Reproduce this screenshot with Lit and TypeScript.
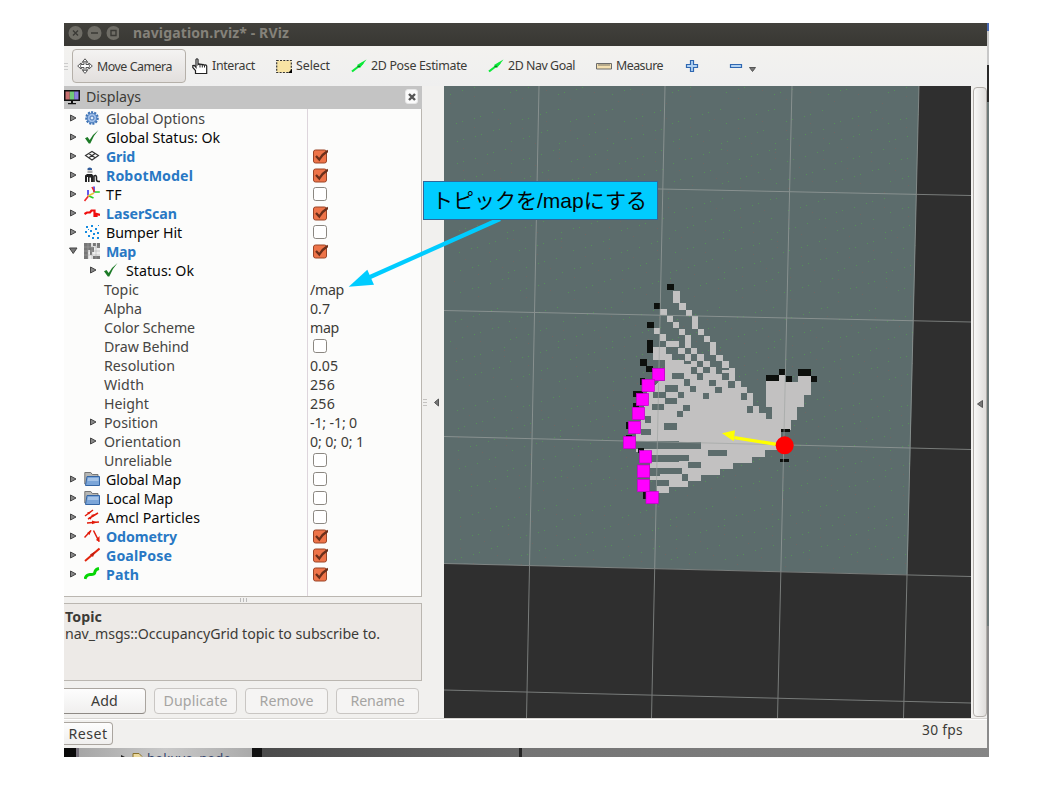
import { LitElement, html, svg, css, nothing } from "lit";
import { customElement, property } from "lit/decorators.js";
import { styleMap } from "lit/directives/style-map.js";

const FAMILY = '"Noto Sans", "Open Sans", sans-serif';
const ctx = document.createElement("canvas").getContext("2d")!;

@customElement("fit-text")
class FitText extends LitElement {
  @property() text = "";
  @property({ type: Number }) w = 0;
  @property({ type: Number }) size = 14.5;
  @property({ type: Boolean }) bold = false;
  static styles = css`
    :host { display: inline-block; white-space: pre; flex: none; }
    .t { font-family: "Noto Sans", "Open Sans", sans-serif; display: block; }
  `;
  render() {
    const weight = this.bold ? 700 : 400;
    ctx.font = `${weight} ${this.size}px ${FAMILY}`;
    const gap = (this.w - ctx.measureText(this.text).width) / this.text.length;
    return html`<span class="t" style=${styleMap({
      fontSize: this.size + "px",
      fontWeight: String(weight),
      letterSpacing: gap.toFixed(3) + "px",
      width: this.w + "px",
    })}>${this.text}</span>`;
  }
}

const fit = (text: string, w: number, size = 14.5, bold = false) =>
  html`<fit-text .text=${text} .w=${w} .size=${size} .bold=${bold}></fit-text>`;

const icons: Record<string, unknown> = {
  gear: svg`<circle cx="8" cy="8" r="5.6" fill="#a9c5ea" stroke="#3f73b5" stroke-width="2.4" stroke-dasharray="2 1.1"/><circle cx="8" cy="8" r="4.7" fill="#9dbde8" stroke="#5585c2"/><circle cx="8" cy="8" r="2" fill="#dce9f8" stroke="#4677b8"/>`,
  check: svg`<path d="M1 9.300 L3.500 8 L5.700 11 Q9 5 14.500 1 Q9 7 6.300 14.500 L4.800 14.500 Z" fill="#1c7a26"/>`,
  grid: svg`<path d="M1.500 7.500 L8 3.500 L14.500 7.500 L8 12 Z M4.700 5.500 L11.200 9.800 M11.200 5.500 L4.700 9.800" fill="none" stroke="#333" stroke-width="1.100"/>`,
  robot: svg`<path d="M3.500 1.500Q5.500 -.5 8 1.500v1.500h-4.500z" fill="#315b99"/><path d="M3.500 3.500h5v2.500h-5z" fill="#aaa"/><path d="M1 8.500L3 7h5l1.500 2v6H7v-4.500H5.500V15H4v-5H3v5H1z" fill="#222"/><path d="M10 15V9q2-1.500 2.500 1v3q.5 2 3.500 1.500" fill="none" stroke="#222" stroke-width="1.500"/>`,
  tf: svg`<path d="M10 6.500 V.5 M4 9.500 V4" stroke="#5148e8" stroke-width="1.800"/><path d="M10.500 6 h5.300 M5 10 L9.500 12" stroke="#25cf25" stroke-width="1.700"/><path d="M10.500 6 L8 1 M4.500 10 L.5 15" stroke="#ef2929" stroke-width="1.600"/><path d="M4 10 L10 7" stroke="#e7c43a" stroke-width="1.800"/>`,
  laser: svg`<path d="M.5 9 L3 7.500 L6 7.500 L7.500 5.500 L10.500 5.500 V11 L12.500 11 V9 L16 10" fill="none" stroke="#f00d0d" stroke-width="2.200"/>`,
  bump: svg`<path d="M2 2h2v2H2zM7 1h2v2H7zM11 4h2v2h-2zM6 6h2v2H6zM1 7h2v2H1zM13 8h2v2h-2zM9 9h2v2H9zM4 11h2v2H4zM8 13h2v2H8zM13 13h2v2h-2zM14 1h1v1h-1zM4 5h1v1H4z" fill="#168be0"/>`,
  map: svg`<path d="M0 0h16v16H0z" fill="#eee"/><path d="M0 0h7v7H4v9H0zM9 0h3v3H9zM13 0h3v5h-3zM7 4h3v5H8v3H6V7h1zM9 13h7v3H9z" fill="#777"/><path d="M4 0v16M8 0v16M12 0v16M0 4h16M0 8h16M0 12h16" stroke="#aaa" stroke-width=".5"/>`,
  folder: svg`<path d="M.8 13V1.500h6l1.500 2h5.700V13z" fill="#b7b7b4" stroke="#777"/><path d="M3 5.500h12.500v9H1.500z" fill="#7ba5d8" stroke="#3465a4"/><path d="M4 7h10.500v3H3.500z" fill="#a5c3e6"/>`,
  amcl: svg`<path d="M1 7 L9 1 M4 10 L14 4 M3 14 L15 13 M5 8.500 L7 10" stroke="#e21c0c" stroke-width="1.500"/><path d="M3 3.500l4-1-2 3zM7 6l4-1-2 3zM8 11.500l5 1.800-5 2z" fill="#e21c0c"/>`,
  odom: svg`<path d="M.5 9.500 L7 2.500 M9.500 2.500 L15 13.500" stroke="#e21c0c" stroke-width="1.500"/><path d="M3 5l4.500-3-2 5zM12 12l3.500 2v-6z" fill="#e21c0c"/>`,
  goal: svg`<path d="M1 14 L15.500 1.500" stroke="#e2240c" stroke-width="2"/><path d="M6 7.500 L11 4.500 L9 10z" fill="#c22010"/>`,
  path: svg`<path d="M1 13 Q2 9 6 8.500 Q11 9 11 5.500 Q12 3 15 2.500" fill="none" stroke="#06d606" stroke-width="3"/>`,
  display: svg`<path d="M0 1h16v11H0z" fill="#111"/><path d="M1.500 2.500h4.300v8H1.500z" fill="#c87070"/><path d="M5.800 2.500h4.400v8H5.800z" fill="#70c878"/><path d="M10.200 2.500h4.300v8h-4.300z" fill="#8a7edc"/><path d="M7 12h2v2h3v1.300H4V14h3z" fill="#111"/>`,
  move: svg`<path d="M8 .8l2.500 3H9v2.700h3V5l3.300 3L12 11V9.500H9v3h1.500L8 15.400 5.500 12.500H7v-3H4V11L.7 8 4 5v1.500h3V3.800H5.500z" fill="#fff" stroke="#555" stroke-width="1"/><ellipse cx="8" cy="8" rx="4.500" ry="4.500" fill="none" stroke="#777"/>`,
  hand: svg`<path d="M3.500 15.500v-3L.8 9.500V7.600l1.500-.2 1.700 2V1.500q1-1.500 2 0v5q1-1 2 0 1-.9 2 .2 1-.6 2 .4 2-.6 2.700.8v7.600z" fill="#fff" stroke="#222" stroke-width="1.200"/><path d="M8 6.500v3M10.300 7V9.500M12.500 7.300V9.500" stroke="#222"/>`,
  select: svg`<path d="M.7 2.500h14.600v12H.7z" fill="#f8e4a4" stroke="#333" stroke-width="1.200" stroke-dasharray="2 1.300"/><path d="M12 15l4-4v4z" fill="#000"/>`,
  green: svg`<path d="M1 13.500 L12 5" stroke="#0bea38" stroke-width="2.200"/><path d="M6 7 L15.500 1.500 L9 10z" fill="#0bea38"/><path d="M6.500 8.500h2.500" stroke="#0a7d22" stroke-width="1.500"/>`,
  ruler: svg`<path d="M.5 5.500h15v5.500H.5z" fill="#f3dfb0" stroke="#6b6b6b"/><path d="M3 6v2M5 6v2M7 6v2M9 6v2M11 6v2M13 6v2" stroke="#555" stroke-width=".8"/>`,
  plus: svg`<path d="M6.500 2.500h3v4h4v3h-4v4h-3v-4h-4v-3h4z" fill="#b3d3f3" stroke="#2f67b1" stroke-width="1.200"/>`,
  minus: svg`<path d="M2.500 6.500h11v3h-11z" fill="#b3d3f3" stroke="#2f67b1" stroke-width="1.200"/>`,
  right: svg`<path d="M6.500 5 L12 8 L6.500 11z" fill="#888" stroke="#444"/>`,
  down: svg`<path d="M5.500 5 H13 L9.200 10.500z" fill="#777" stroke="#444"/>`,
  left: svg`<path d="M10.500 6.500 V13.500 L5.500 10z" fill="#777" stroke="#555"/>`,
  on: svg`<rect x="1.500" y="2" width="13" height="13" rx="2" fill="#ee7449" stroke="#9a4427"/><path d="M4 8 L7.300 11.500 Q10.500 6 16 2.800" fill="none" stroke="#6b2f1b" stroke-width="2.300"/>`,
  off: svg`<rect x="1.500" y="1.500" width="13" height="13" rx="2.200" fill="#fff" stroke="#8b8781"/>`,
};
const icon = (n: string) => html`<svg class="i" width="16" height="16" viewBox="0 0 16 16">${icons[n]}</svg>`;

type Row = { t: string; w: number; i?: string; k?: "b" | "k" | "g"; d?: number; a?: string; v?: string; vw?: number; c?: boolean };
const rows: Row[] = [
  { t: "Global Options", w: 99, i: "gear", k: "g", a: "right" },
  { t: "Global Status: Ok", w: 114, i: "check", a: "right" },
  { t: "Grid", w: 29, i: "grid", k: "b", a: "right", c: true },
  { t: "RobotModel", w: 87, i: "robot", k: "b", a: "right", c: true },
  { t: "TF", w: 16, i: "tf", a: "right", c: false },
  { t: "LaserScan", w: 71, i: "laser", k: "b", a: "right", c: true },
  { t: "Bumper Hit", w: 76, i: "bump", a: "right", c: false },
  { t: "Map", w: 30, i: "map", k: "b", a: "down", c: true },
  { t: "Status: Ok", w: 68, i: "check", d: 1, a: "right" },
  { t: "Topic", w: 35, k: "g", d: 1, v: "/map", vw: 34 },
  { t: "Alpha", w: 38, k: "g", d: 1, v: "0.7", vw: 20 },
  { t: "Color Scheme", w: 91, k: "g", d: 1, v: "map", vw: 29 },
  { t: "Draw Behind", w: 85, k: "g", d: 1, c: false },
  { t: "Resolution", w: 71, k: "g", d: 1, v: "0.05", vw: 28 },
  { t: "Width", w: 40, k: "g", d: 1, v: "256", vw: 25 },
  { t: "Height", w: 45, k: "g", d: 1, v: "256", vw: 25 },
  { t: "Position", w: 54, k: "g", d: 1, a: "right", v: "-1; -1; 0", vw: 47 },
  { t: "Orientation", w: 77, k: "g", d: 1, a: "right", v: "0; 0; 0; 1", vw: 54 },
  { t: "Unreliable", w: 68, k: "g", d: 1, c: false },
  { t: "Global Map", w: 75, i: "folder", a: "right", c: false },
  { t: "Local Map", w: 67, i: "folder", a: "right", c: false },
  { t: "Amcl Particles", w: 94, i: "amcl", a: "right", c: false },
  { t: "Odometry", w: 71, i: "odom", k: "b", a: "right", c: true },
  { t: "GoalPose", w: 66, i: "goal", k: "b", a: "right", c: true },
  { t: "Path", w: 33, i: "path", k: "b", a: "right", c: true },
];

type R = [number, number, number, number];
const upperFree: R[] = [
  [190,62,20,37],[208,99,20,20],[228,120,18,18],[246,138,18,39],[264,177,18,18],[282,197,18,19],[300,216,18,38],[318,254,21,19],[337,273,20,20],[357,293,18,10],
  [150,117,20,18],[170,137,18,19],[189,156,18,19],[207,177,18,18],[225,195,18,39],[243,234,18,18],[262,253,20,19],[280,272,20,20],[300,291,18,12],
  [132,174,18,18],[150,193,18,20],[168,213,39,18],[129,231,39,38],[204,234,21,18],[168,252,18,30],[225,252,18,20],[165,270,57,20],[243,272,18,20],[165,290,78,12],[262,290,18,12],[186,283,57,10],[318,300,57,3],
];
const holes: R[] = [
  [186,8,36,18],[222,28,18,20],[262,10,18,20],[240,48,18,18],[298,30,20,18],[316,50,20,20],[318,-1,18,12],[336,10,20,20],[354,33,20,20],[243,-8,18,20],[280,-8,20,18],[280,68,18,19],
  [393,70,18,20],[411,108,18,20],[165,45,38,20],[204,66,18,18],[129,65,38,18],[165,84,35,18],[125,102,37,18],[220,104,20,19],[201,123,18,18],[105,138,18,20],
  [163,159,38,20],[93,177,30,18],[78,216,195,20],[78,214,130,5],[295,240,56,18],[120,256,117,18],[120,274,86,2],[234,276,39,18],[120,293,96,18],[216,312,18,20],[120,312,30,5],[140,330,38,18],[467,110,19,36],
];
const walls: R[] = [
  [171,-258,21,18],[132,-201,18,18],[111,-145,20,18],[111,-89,18,37],[90,-33,20,20],[108,-11,20,16],[90,24,16,20],[468,15,39,19],[507,-3,18,18],[528,17,18,18],[564,-3,39,21],[603,18,18,17],
  [69,63,30,18],[69,99,18,12],[48,156,20,20],[48,195,18,6],[84,234,18,14],[99,365,15,21],[513,177,27,8],[510,267,27,8],
];
const scans: [number, number][] = [[126,-6],[95,27],[78,69],[66,111],[54,153],[39,198],[87,241],[81,284],[81,327],[107,363]];
const cells = (list: R[]) => list.map(([x, y, w, h]) => `M${x} ${y}h${w}v${h}h${-w}z`).join("");

const speckle = (() => {
  let g = "", r = "";
  for (let row = 0; row < 22; row++) {
    for (let k = 0; k < 86; k++) {
      const x = 450 + k * 6 + ((row * 17) % 11);
      const y = 94 + row * 22 - (k % 9) * 1.8 + ((row * 7) % 9);
      if ((k * 7 + row * 5) % 11 < 7) g += `M${Math.round(x)} ${Math.round(y)}h1v1h-1z`;
      if ((k + row) % 4 === 0) r += `M${Math.round(x)} ${Math.round(y + 9)}h1v1h-1z`;
    }
  }
  return { g, r };
})();

@customElement("app-root")
class AppRoot extends LitElement {
  static styles = css`
    * { box-sizing: border-box; }
    :host { display: block; box-sizing: border-box; position: relative; width: 1058px; height: 794px; background: #fff; padding: 23px 0 0 64px; overflow: hidden; color: #3c3b37; font-family: "Noto Sans", sans-serif; }
    svg { display: block; flex: none; }
    .desk { display: grid; grid-template-columns: 923px 2px; width: 925px; }
    .win { height: 725px; background: #f1f0ee; display: flex; flex-direction: column; }
    .title { height: 23px; background: linear-gradient(#42413c, #383733); display: flex; align-items: center; color: #85827a; padding: 0 0 4px 3px; }
    .title svg { margin: 1px 14px 0 0; }
    .tools { height: 40px; display: flex; align-items: center; background: linear-gradient(#f3f2ef, #efefef); }
    .tool { display: flex; align-items: center; height: 34px; gap: 4px; padding-bottom: 1px; }
    .grip { width: 8px; }
    .active { width: 114px; border: 1px solid #b5b0a9; border-radius: 4px; padding: 0 0 0 4px; background: linear-gradient(#f4f3f2, #e2dfdd); }
    .gap-s { margin-left: 6px; }
    .gap-m { margin-left: 21px; }
    .gap-l { margin-left: 28px; }
    .body { height: 632px; display: flex; }
    .panel { width: 358px; display: flex; flex-direction: column; }
    .head { height: 23px; background: #c4c4c4; display: flex; align-items: center; gap: 6px; padding: 0 4px 2px 0; }
    .close { margin-left: auto; width: 13px; height: 15px; border-radius: 3px; background: #fbfbfb; border: 1px solid #e8e8e8; display: grid; place-items: center; }
    .tree { height: 488px; background: #fcfcfb; border-right: 1px solid #bab6b0; border-bottom: 1px solid #bab6b0; background-image: linear-gradient(#ddd5dc, #ddd5dc); background-size: 1px 100%; background-position: 243px 0; background-repeat: no-repeat; }
    .row { height: 19px; display: grid; grid-template-columns: 243px 1fr; grid-template-rows: 18px; align-items: center; }
    .name { display: flex; align-items: center; }
    .arrow { width: 16px; height: 16px; }
    .l0 { padding-left: 0; }
    .l1 { padding-left: 20px; }
    .ic { margin-left: 4px; }
    .txt { margin-left: 4px; }
    .ic + .txt { margin-left: 6px; }
    .l1 .ic { margin-left: 3px; }
    .l1 .ic + .txt { margin-left: 7px; }
    .k { color: #080808; }
    .b { color: #2878c4; }
    .g { color: #464543; }
    .val { padding-left: 3px; display: flex; align-items: center; height: 18px; }
    .val.c { padding-left: 5px; }
    .hgrip { height: 6px; display: flex; justify-content: center; align-items: center; }
    .desc { height: 78px; background: #edeae7; border: 1px solid #bab6b0; border-left: 0; padding: 4px 1px; line-height: 17px; display: flex; flex-direction: column; align-items: flex-start; }
    .desc fit-text { height: 17px; }
    .btns { display: flex; gap: 8px; padding-top: 7px; }
    .btn { height: 26px; width: 83px; border: 1px solid #aaa59f; border-radius: 4px; display: grid; place-items: center; background: linear-gradient(#fdfdfd, #f0efee); padding-bottom: 2px; }
    .btn.first { width: 82px; border-left: 0; border-radius: 0 4px 4px 0; border-bottom-color: #8e8a85; }
    .btn.dis { color: #a5a4a2; border-color: #c9c6c3; background: #f5f4f3; }
    .split { width: 22px; display: flex; align-items: center; }
    .side { width: 16px; padding: 1px 1px 1px 2px; display: flex; }
    .bar { width: 14px; border: 1px solid #b2aeaa; border-radius: 4px; background: linear-gradient(90deg, #f8f8f7, #dfdddb); display: flex; align-items: center; justify-content: center; }
    .status { height: 30px; border-top: 1px solid #d8d6d3; display: flex; justify-content: space-between; align-items: flex-start; padding: 3px 24px 0 0; box-shadow: inset 0 1px #fff; }
    .status > fit-text { line-height: 15px; }
    .reset { width: 49px; height: 23px; border: 1px solid #aaa59f; border-left: 0; border-radius: 0 4px 4px 0; display: grid; place-items: center; background: linear-gradient(#fdfdfd, #f0efee); }
    .sliver { background: linear-gradient(#4a69b0 0 8px, #c8c8c8 8px 42px, #292929 42px 79px, #6d7979 79px 603px, #8b8b8b 603px); height: 725px; }
    .under { grid-column: 1 / 3; height: 9px; overflow: hidden; display: flex; background: linear-gradient(90deg, #626262, #858585); }
    .u1 { width: 15px; background: linear-gradient(90deg, #090909 12px, #77727c 12px); }
    .u2 { width: 173px; background: linear-gradient(90deg, #a6a6a6, #c9c9c9 50%, #aaa); display: flex; padding-left: 38px; gap: 4px; color: #34446b; line-height: 20px; }
    .u3 { width: 10px; background: #111; }
    .u4 { width: 260px; background: linear-gradient(90deg, #4b4b4b, #686868); border-right: 3px solid #252525; }
    .note { position: absolute; left: 423px; top: 181px; width: 235px; height: 39px; background: #00ccff; border: 1px solid #31679a; color: #050505; font-family: "Liberation Sans", "Noto Sans CJK JP", sans-serif; font-size: 21px; line-height: 38px; padding-left: 8px; white-space: nowrap; }
    .pointer { position: absolute; left: 340px; top: 210px; }
  `;

  row(r: Row) {
    return html`<div class="row">
      <div class="name ${r.d ? "l1" : "l0"}">
        <span class="arrow">${r.a ? icon(r.a) : nothing}</span>
        ${r.i ? html`<span class="ic">${icon(r.i)}</span>` : nothing}
        <span class="txt ${r.k ?? "k"}">${fit(r.t, r.w, 14.2, r.k === "b")}</span>
      </div>
      <div class="val ${r.c !== undefined ? "c" : ""}">
        ${r.c !== undefined ? icon(r.c ? "on" : "off") : r.v ? fit(r.v, r.vw!, 14.2) : nothing}
      </div>
    </div>`;
  }

  scene() {
    return html`<svg width="527" height="632" viewBox="444 86 527 632">
      <rect x="444" y="86" width="527" height="632" fill="#2f2f2f"/>
      <path d="M444 86H919L907.500 574.500L444 563.500z" fill="#5c6c6c"/>
      <g shape-rendering="crispEdges">
        <clipPath id="known"><path d="M444 86H919L907.500 574.500L444 563.500z"/></clipPath>
        <path d=${speckle.g} fill="#549a54" opacity=".8" clip-path="url(#known)"/>
        <path d=${speckle.r} fill="#6f6663" clip-path="url(#known)"/>
      </g>
      <g transform="translate(610 370) scale(.33333)" shape-rendering="crispEdges">
        <path d=${cells(upperFree)} transform="translate(0 -300)" fill="#c2c1c1"/>
        <path fill="#c2c1c1" d="M165 0H375V33H393V50H411V70H429V108H447V128H467V20H507V8H525V35H565V18H602V74H582V112H562V150H543V180H513V240H466V260H427V278H369V296H330V314H273V332H234V350H177V368H140V330H120V245H78V190L100 130L110 70L129 50L150 33L165 33z"/>
        <path d=${cells(holes)} fill="#5c6c6c"/>
        <path d=${cells(walls)} fill="#0d100d"/>
      </g>
      <g fill="none" stroke="#a0a5a3" stroke-width="1" opacity=".65">
        <path d="M539 86L526.500 718M665 86L651.500 718M792 86L777.500 718M919 86L903.500 718"/>
        <path d="M444 184.500L971 195.500M444 310.500L971 322M444 436.500L971 449.500M444 563.500L971 576.500M444 690L971 703"/>
      </g>
      <g transform="translate(610 370) scale(.33333)">
        ${scans.map(([x, y]) => svg`<rect x=${x + 1} y=${y + 1} width="37" height="37" fill="#ff00ff" stroke="#c000c8" stroke-width="2"/>`)}
        <path d="M373 203L500 223" stroke="#ffff00" stroke-width="10"/>
        <path d="M336 190L375 181L371 214z" fill="#ffff00"/>
        <circle cx="524" cy="226" r="27" fill="#ff0000"/>
      </g>
    </svg>`;
  }

  render() {
    return html`
      <div class="desk">
        <div class="win">
          <div class="title">
            <svg width="52" height="16" viewBox="0 0 52 16"><g fill="#6f6d66"><circle cx="8.500" cy="8" r="7"/><circle cx="27.500" cy="8" r="7"/><circle cx="46.500" cy="8" r="7"/></g><path d="M6 5.500l5 5m0-5l-5 5M24 8h7M44 5.500h5v5h-5z" fill="none" stroke="#3b3a36" stroke-width="1.400"/></svg>
            ${fit("navigation.rviz* - RViz", 156, 14, true)}
          </div>
          <div class="tools">
            <svg class="grip" width="8" height="12" viewBox="0 0 8 12"><path d="M0 3.500h4M0 6.500h4M0 9.500h4" stroke="#ccc"/></svg>
            <div class="tool active">${icon("move")}${fit("Move Camera", 75, 12.4)}</div>
            <div class="tool gap-s">${icon("hand")}${fit("Interact", 43, 12.4)}</div>
            <div class="tool gap-m">${icon("select")}${fit("Select", 34, 12.4)}</div>
            <div class="tool gap-m">${icon("green")}${fit("2D Pose Estimate", 96, 12.4)}</div>
            <div class="tool gap-m">${icon("green")}${fit("2D Nav Goal", 67, 12.4)}</div>
            <div class="tool gap-m">${icon("ruler")}${fit("Measure", 47, 12.4)}</div>
            <div class="tool gap-m">${icon("plus")}</div>
            <div class="tool gap-l">${icon("minus")}<svg width="10" height="14" viewBox="0 0 10 14"><path d="M1.500 8.500h6L4.500 12.500z" fill="#777" stroke="#555"/></svg></div>
          </div>
          <div class="body">
            <div class="panel">
              <div class="head">${icon("display")}${fit("Displays", 55, 14.2)}
                <span class="close"><svg width="8" height="8" viewBox="0 0 8 8"><path d="M1 1l6 6M7 1L1 7" stroke="#555" stroke-width="2.400"/></svg></span>
              </div>
              <div class="tree">${rows.map((r) => this.row(r))}</div>
              <div class="hgrip"><svg width="8" height="4" viewBox="0 0 8 4"><path d="M1.500 0v4M4.500 0v4M7.500 0v4" stroke="#bbb"/></svg></div>
              <div class="desc">${fit("Topic", 37, 14.2, true)}${fit("nav_msgs::OccupancyGrid topic to subscribe to.", 315, 14.2)}</div>
              <div class="btns">
                <div class="btn first">${fit("Add", 27, 14.2)}</div>
                <div class="btn dis">${fit("Duplicate", 64, 14.2)}</div>
                <div class="btn dis">${fit("Remove", 54, 14.2)}</div>
                <div class="btn dis">${fit("Rename", 54, 14.2)}</div>
              </div>
            </div>
            <div class="split"><svg width="22" height="16" viewBox="0 0 22 16"><path d="M1 5.500h4M1 8.500h4M1 11.500h4" stroke="#c4c2c0"/><path d="M16.500 5v7L12.500 8.500z" fill="#777" stroke="#555"/></svg></div>
            ${this.scene()}
            <div class="side"><div class="bar">${icon("left")}</div></div>
          </div>
          <div class="status"><div class="reset">${fit("Reset", 39, 14.2)}</div>${fit("30 fps", 41, 13.8)}</div>
        </div>
        <div class="sliver"></div>
        <div class="under">
          <div class="u1"></div>
          <div class="u2"><svg width="26" height="9" viewBox="0 0 26 9"><path d="M4 7l4 2H4z" fill="#222"/><path d="M16 10V5.500h6l3 3" fill="#ead89c" stroke="#88702b"/></svg>${fit("hokuyo_node", 84, 13)}</div>
          <div class="u3"></div><div class="u4"></div>
        </div>
      </div>
      <svg class="pointer" width="170" height="85" viewBox="340 210 170 85"><path d="M500 219L369 277.500" stroke="#00ccff" stroke-width="4.200"/><path d="M348.700 286.700L367.300 269.700L374 284.700z" fill="#00ccff"/></svg>
      <div class="note">トピックを/mapにする</div>
    `;
  }
}
